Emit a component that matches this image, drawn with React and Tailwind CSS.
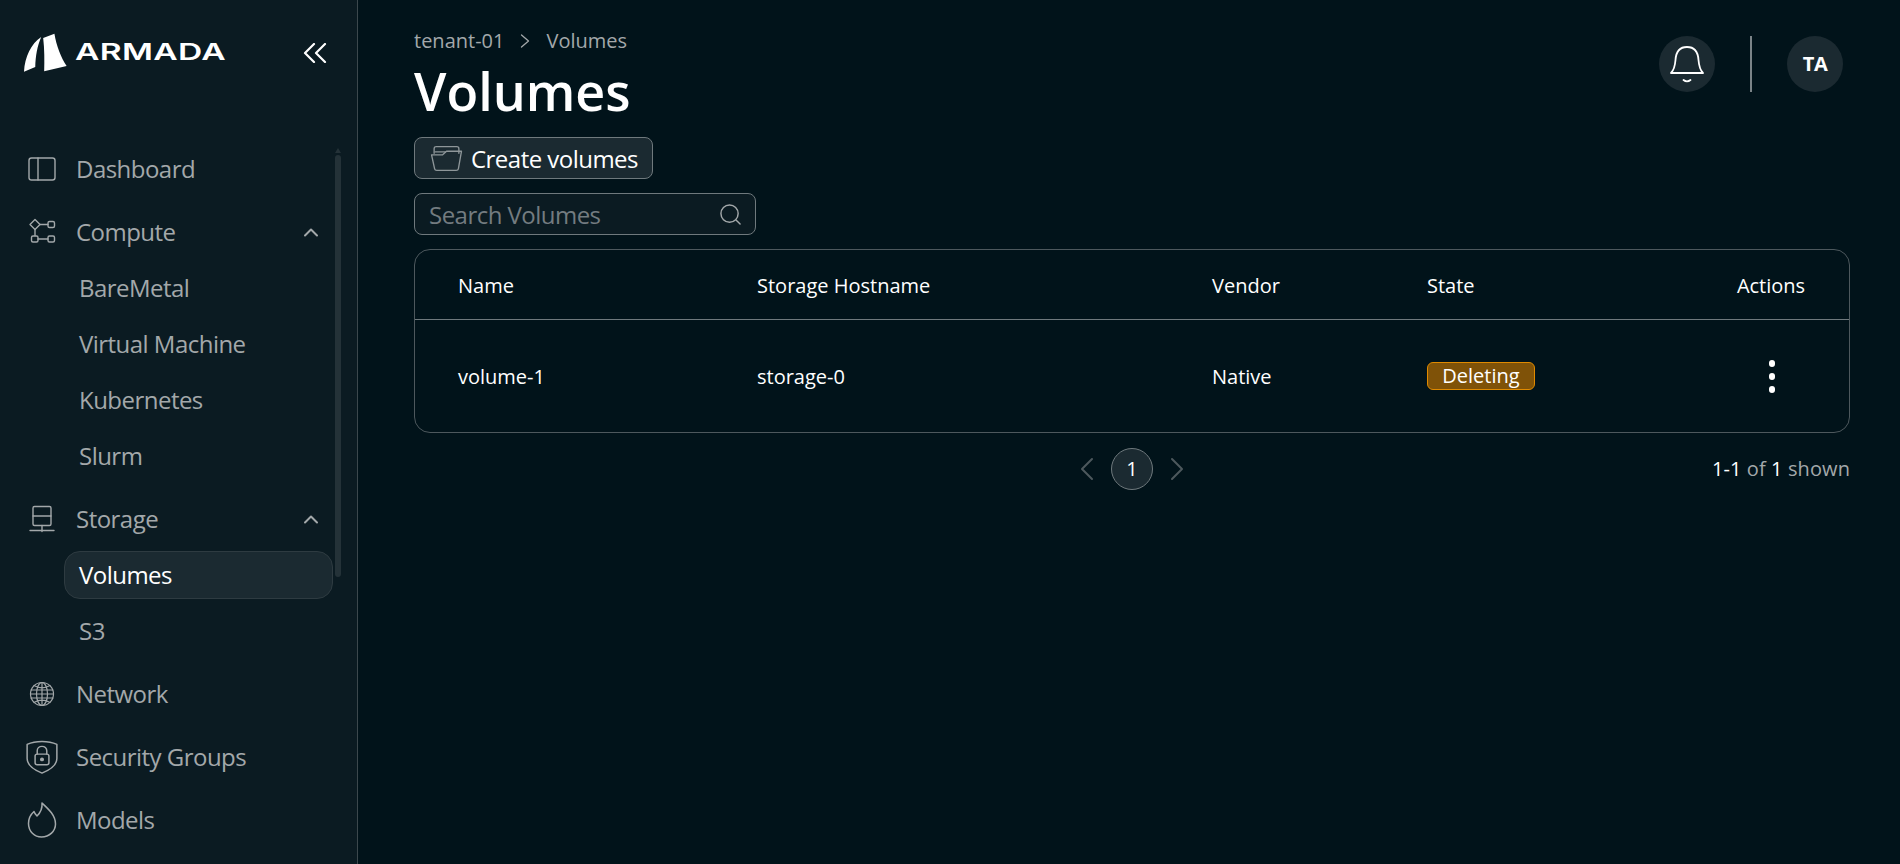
import React from "react";

const Ic = ({ children, strokeWidth = 1.4 }) => (
  <svg viewBox="0 0 32 32" fill="none" stroke="currentColor" strokeWidth={strokeWidth} strokeLinecap="round" strokeLinejoin="round" className="w-8 h-8 shrink-0">
    {children}
  </svg>
);

const Dashboard = () => (
  <Ic><rect x="3" y="5" width="26" height="22" rx="2.500" /><path d="M12 5v22" /></Ic>
);
const Compute = () => (
  <Ic>
    <path d="M9 3.500l5 5-5 5-5-5z" /><rect x="22" y="5.500" width="6.500" height="6" rx="1.500" /><path d="M14 8.500h8" />
    <path d="M9 13.500v6" /><rect x="5.500" y="20" width="6.500" height="6" rx="1.500" /><rect x="22" y="20" width="6.500" height="6" rx="1.500" /><path d="M12 23h10" />
  </Ic>
);
const Storage = () => (
  <Ic><rect x="7" y="3.500" width="18" height="19" rx="1.500" /><path d="M7 13h18M16 22.500v6M4 27.500h24" /></Ic>
);
const Network = () => (
  <Ic strokeWidth={1.2}>
    <circle cx="16" cy="16" r="11.500" />
    <ellipse cx="16" cy="16" rx="5.500" ry="11.500" />
    <path d="M16 4.500v23M5 12h22M5 20h22M4.500 16h23M8 7.500c5 3 11 3 16 0M8 24.500c5-3 11-3 16 0" />
  </Ic>
);
const Shield = () => (
  <svg viewBox="0 0 32 36" preserveAspectRatio="none" fill="none" stroke="currentColor" strokeWidth="1.400" strokeLinecap="round" strokeLinejoin="round" className="w-[34px] h-[35px] shrink-0 -ml-[1px]">
    <path d="M16 1.500C20 1.500 26 2.500 30 4.500V19C30 26 23 31 16 34 9 31 2 26 2 19V4.500C6 2.500 12 1.500 16 1.500Z" />
    <rect x="9.500" y="14.500" width="13" height="11" rx="2" />
    <path d="M11.500 14.500V11a4.500 4.500 0 0 1 9 0v3.500" />
    <circle cx="16" cy="20" r="1.200" fill="currentColor" />
  </svg>
);
const Flame = () => (
  <svg viewBox="0 0 32 38" fill="none" stroke="currentColor" strokeWidth="1.500" strokeLinecap="round" strokeLinejoin="round" className="w-8 h-[38px] shrink-0">
    <path d="M16 2C16.500 7 14.500 11.500 11 15 9.500 13.500 8.500 12 8 10.500 4 14 2.500 18 2.500 22.500 2.500 30.500 8.500 36 15.500 36 23.500 36 29.500 30 29.500 23 29.500 14.500 23 8.500 16 2Z" />
  </svg>
);
const Chevron = () => (
  <svg viewBox="0 0 16 12" fill="none" stroke="currentColor" strokeWidth="2" strokeLinecap="round" strokeLinejoin="round" className="w-4 h-3">
    <path d="M2 9.500l6-6 6 6" />
  </svg>
);

const Top = ({ icon, label, chevron }) => (
  <div className="flex items-center h-12 pl-[26px] pr-[14px] text-[#a3a8aa]">
    <span className="w-[50px] flex items-center">{icon}</span>
    <span className="flex-1">{label}</span>
    {chevron && <Chevron />}
  </div>
);
const Sub = ({ label, active }) => (
  <div className={"flex items-center h-12 ml-[64px] pl-[14px] rounded-2xl border " + (active ? "bg-[#1b2a31] border-[#2e3b41] text-white" : "border-transparent text-[#a3a8aa]")}>
    {label}
  </div>
);

export default function App() {
  return (
    <div className="flex h-screen overflow-hidden bg-[#01131a] text-white text-2xl font-['Open_Sans',sans-serif] tracking-[-0.022em]">
      <aside className="w-[358px] shrink-0 bg-[#0b1b22] border-r border-[#3c484d] flex flex-col">
        <div className="flex items-center h-[145px] pl-[24px] pr-[30px] pb-[40px] justify-between">
          <div className="flex items-center">
            <svg viewBox="70 96 130 118" className="w-[43px] h-[39px]" fill="#fff">
              <path d="M122 108C92 128 72 168 70 213L104 199C105 165 110 135 122 108Z" />
              <path d="M162 98L128 111C132 145 132 180 131 212L199 196C182 170 168 135 162 98Z" />
            </svg>
            <span className="ml-[8px] w-[150px] inline-block origin-left scale-x-[1.46] font-['Inter',sans-serif] text-[23px] leading-none font-semibold tracking-[0.01em]">ARMADA</span>
          </div>
          <svg viewBox="0 0 24 20" fill="none" stroke="#fff" strokeWidth="2.200" strokeLinecap="round" strokeLinejoin="round" className="w-6 h-5">
            <path d="M11 1L2 10l9 9M22 1L13 10l9 9" />
          </svg>
        </div>
        <div className="flex flex-1 min-h-0">
          <nav className="flex-1 flex flex-col gap-[15px]">
            <Top icon={<Dashboard />} label="Dashboard" />
            <div className="flex flex-col gap-2">
              <Top icon={<Compute />} label="Compute" chevron />
              <Sub label="BareMetal" />
              <Sub label="Virtual Machine" />
              <Sub label="Kubernetes" />
              <Sub label="Slurm" />
            </div>
            <div className="flex flex-col gap-2">
              <Top icon={<Storage />} label="Storage" chevron />
              <Sub label="Volumes" active />
              <Sub label="S3" />
            </div>
            <Top icon={<Network />} label="Network" />
            <Top icon={<Shield />} label="Security Groups" />
            <Top icon={<Flame />} label="Models" />
          </nav>
          <div className="w-[6px] ml-[2px] mr-[16px] shrink-0 flex flex-col items-center">
            <div className="w-0 h-0 mt-[3px] border-x-[3px] border-x-transparent border-b-[5px] border-b-[#243238]" />
            <div className="w-[6px] h-[422px] mt-[2px] rounded-full bg-[#243238]" />
          </div>
        </div>
      </aside>

      <main className="flex-1 min-w-0 pl-14 pr-[50px] flex flex-col">
        <header className="flex justify-between">
          <div className="pt-[27px]">
            <div className="flex items-center h-7 text-xl tracking-normal text-[#a3a8aa]">
              <span>tenant-01</span>
              <svg viewBox="0 0 10 16" fill="none" stroke="currentColor" strokeWidth="1.300" strokeLinecap="round" strokeLinejoin="round" className="w-[10px] h-4 ml-[16px] mr-[16px]">
                <path d="M1.500 2l7 6-7 6" />
              </svg>
              <span>Volumes</span>
            </div>
            <h1 className="text-[52px] leading-[62px] mt-[5px] font-semibold tracking-normal">Volumes</h1>
          </div>
          <div className="flex items-center gap-[35px] mr-[7px] mt-9 self-start">
            <div className="w-14 h-14 rounded-full bg-[#1b2a31] flex items-center justify-center">
              <svg viewBox="0 0 36 40" fill="none" stroke="#fff" strokeWidth="1.800" strokeLinecap="round" strokeLinejoin="round" className="w-9 h-10">
                <path d="M2 29C5 26 6 22 6.500 16 7 8 11 3 18 3S29 8 29.500 16C30 22 31 26 34 29Z" />
                <path d="M14.500 36c2 1.500 5 1.500 7 0" />
              </svg>
            </div>
            <div className="w-[2px] h-14 bg-[#7b8488]" />
            <div className="w-14 h-14 rounded-full bg-[#1b2a31] flex items-center justify-center text-xl font-bold">TA</div>
          </div>
        </header>

        <div className="mt-[15px]">
          <button className="h-[42px] w-[239px] flex items-center pl-[15px] rounded-lg border border-[#6f797d] bg-[#1b2a31] text-2xl">
            <svg viewBox="0 0 32 26" fill="none" stroke="#8e9699" strokeWidth="1.300" strokeLinecap="round" strokeLinejoin="round" className="w-[33px] h-[27px] mr-[8px] shrink-0">
              <path d="M4 8V3.500C4 2 5 1.500 6 1.500H26C27 1.500 28 2.500 28 3.500V8" />
              <path d="M1.500 9.500H12L16 6H30.500L27.500 23C27.300 24 26.500 24.500 25.500 24.500H6.500C5.500 24.500 4.700 24 4.500 23Z" />
              <path d="M5 6.500H15" />
            </svg>
            <span className="pt-[1px]">Create volumes</span>
          </button>
        </div>
        <div className="mt-[14px] h-[42px] w-[342px] flex items-center justify-between pl-[14px] pr-[13px] rounded-lg border border-[#6f797d] bg-[#0b1b22] text-[#737c80]">
          <span className="pt-[1px]">Search Volumes</span>
          <svg viewBox="0 0 24 24" fill="none" stroke="#a3a8aa" strokeWidth="1.500" strokeLinecap="round" className="w-[23px] h-[23px]">
            <circle cx="11" cy="11" r="9" /><path d="M18 18l4 4" />
          </svg>
        </div>

        <section className="mt-[14px] h-[184px] rounded-2xl border border-[#4d585d] text-xl tracking-normal flex flex-col">
          <div className="grid grid-cols-[299px_455px_215px_1fr_70px] items-center h-[70px] pt-[2px] px-[43px] border-b border-[#6f797d]">
            <span>Name</span>
            <span>Storage Hostname</span>
            <span>Vendor</span>
            <span>State</span>
            <span className="text-center">Actions</span>
          </div>
          <div className="grid grid-cols-[299px_455px_215px_1fr_70px] items-center flex-1 px-[43px]">
            <span className="pt-[2px]">volume-1</span>
            <span className="pt-[2px]">storage-0</span>
            <span className="pt-[2px]">Native</span>
            <span className="h-7 w-[108px] flex items-center justify-center rounded-md border border-[#e08a00] bg-[#7f5208]">Deleting</span>
            <div className="flex flex-col items-center gap-[6px] pl-[1px]">
              <i className="w-[6px] h-[7px] rounded-full bg-white" />
              <i className="w-[6px] h-[7px] rounded-full bg-white" />
              <i className="w-[6px] h-[7px] rounded-full bg-white" />
            </div>
          </div>
        </section>

        <div className="mt-[15px] grid grid-cols-[1fr_auto_1fr] items-center text-xl tracking-[0.005em]">
          <span />
          <div className="flex items-center gap-[17px] text-[#4d585d]">
            <svg viewBox="0 0 14 24" fill="none" stroke="currentColor" strokeWidth="2" strokeLinecap="round" strokeLinejoin="round" className="w-[14px] h-6"><path d="M12 2L2 12l10 10" /></svg>
            <div className="w-[42px] h-[42px] rounded-full border border-[#6f797d] bg-[#1b2a31] flex items-center justify-center text-white">1</div>
            <svg viewBox="0 0 14 24" fill="none" stroke="currentColor" strokeWidth="2" strokeLinecap="round" strokeLinejoin="round" className="w-[14px] h-6"><path d="M2 2l10 10L2 22" /></svg>
          </div>
          <div className="text-right text-[#a3a8aa]"><span className="text-white">1-1</span> of <span className="text-white">1</span> shown</div>
        </div>
      </main>
    </div>
  );
}
